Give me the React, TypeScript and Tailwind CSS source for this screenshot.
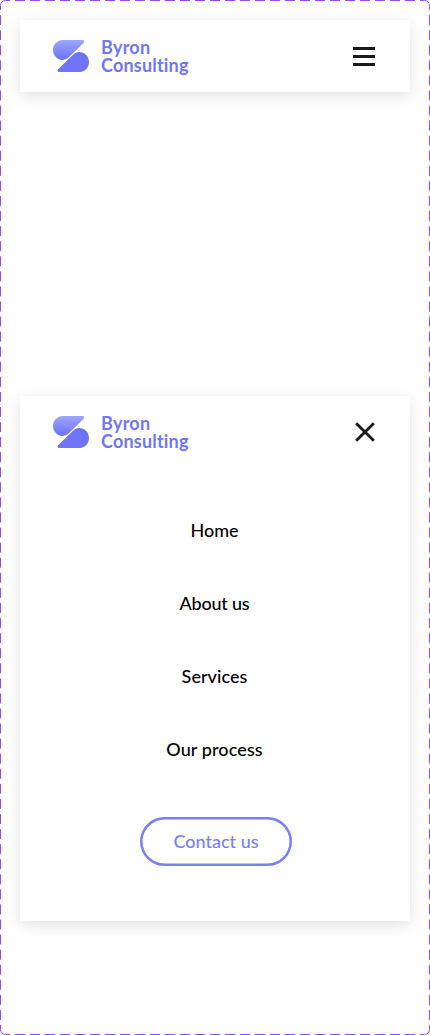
import React from "react";

function Logo({ id }: { id: string }) {
  return (
    <a className="flex items-start gap-3 text-[#6f76fa]">
      <svg className="mt-px h-8 w-9 shrink-0" viewBox="0 0 36 32" aria-hidden="true">
        <defs>
          <linearGradient id={id} x1="0" y1="0" x2="0" y2="1">
            <stop offset="0" stopColor="#9ea8fd" />
            <stop offset="1" stopColor="#6c70f8" />
          </linearGradient>
        </defs>
        <path d="M10 0H29.8C31.3 0 31.8 1.7 30.7 2.7L16.1 17.1C14.3 18.9 12.3 19.9 9.8 19.9C4.3 19.9 0 15.5 0 10C0 4.4 4.4 0 10 0Z" fill={`url(#${id})`} />
        <path d="M26 32H6.1C4.6 32 4.1 30.3 5.2 29.3L19.9 14.9C21.7 13.1 23.7 12 26.2 12C31.7 12 36 16.4 36 21.9C36 27.5 31.6 32 26 32Z" fill="#6e73f9" />
      </svg>
      <span className="-mt-px flex flex-col whitespace-nowrap text-[18px] leading-[18px] font-bold">
        <span className="tracking-[0.25px]">Byron</span>
        <span className="tracking-[0.2px]">Consulting</span>
      </span>
    </a>
  );
}

function Frame() {
  return (
    <svg className="pointer-events-none absolute inset-0" width="430" height="1035" viewBox="0 0 430 1035" fill="none" stroke="#9747ff" aria-hidden="true">
      <path d="M15 .5H420M15 1034.5H420" strokeDasharray="10 5" />
      <path d="M.5 15.07V1025M429.5 15.07V1025" strokeDasharray="10 5.074" />
      <path d="M.5 10V5.5A5 5 0 0 1 5.5 .5H10M420 .5H424.5A5 5 0 0 1 429.5 5.5V10M429.5 1025V1029.5A5 5 0 0 1 424.5 1034.5H420M10 1034.5H5.5A5 5 0 0 1 .5 1029.5V1025" />
    </svg>
  );
}

const links = [
  { label: "Home", style: "tracking-[0px]" },
  { label: "About us", style: "tracking-[-0.2px]" },
  { label: "Services", style: "tracking-[0.05px]" },
  { label: "Our process", style: "tracking-[0.1px]" },
];

export default function App() {
  return (
    <main className="relative flex h-[1035px] w-[430px] flex-col bg-white px-5 pt-5 font-['Lato','Open_Sans',sans-serif]">
      <Frame />
      <header className="flex h-[72px] shrink-0 items-start justify-between bg-white pt-[19px] pr-[35px] pl-[33px] shadow-[0_4px_15px_rgba(0,0,0,0.12)]">
        <Logo id="logo-closed" />
        <button className="mt-2 flex w-[22px] flex-col gap-[5px]" aria-label="Open menu">
          <span className="h-[3px] w-full bg-[#18171d]" />
          <span className="h-[3px] w-full bg-[#18171d]" />
          <span className="h-[3px] w-full bg-[#18171d]" />
        </button>
      </header>
      <section className="mt-[304px] flex h-[525px] shrink-0 flex-col bg-white shadow-[0_4px_15px_rgba(0,0,0,0.12)]">
        <div className="flex h-[72px] shrink-0 items-start justify-between pt-[19px] pr-[35px] pl-[33px]">
          <Logo id="logo-open" />
          <button className="mt-[7px]" aria-label="Close menu">
            <svg className="block" width="20" height="20" viewBox="0 0 20 20" stroke="#18171d" strokeWidth="2.8" aria-hidden="true">
              <path d="M1.2 1.2L18.8 18.8M18.8 1.2L1.2 18.8" />
            </svg>
          </button>
        </div>
        <nav className="mt-[50px] flex flex-col items-center gap-[49px] pr-px text-[18px] leading-6 font-medium text-black">
          {links.map((l) => (
            <a key={l.label} className={l.style}>{l.label}</a>
          ))}
        </nav>
        <button className="mt-[56px] ml-[120px] flex h-[49px] w-[152px] items-center justify-center rounded-full text-[18px] font-medium text-[#7780fa] shadow-[inset_0_0_0_2.5px_#7780fa]">
          Contact us
        </button>
      </section>
    </main>
  );
}
